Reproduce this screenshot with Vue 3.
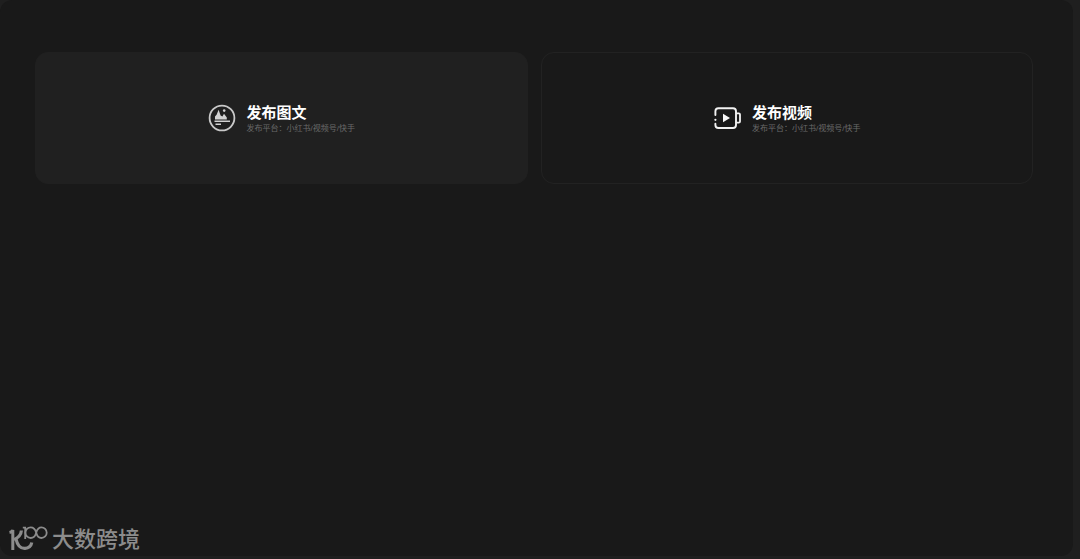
<script setup>
const platforms = '发布平台：小红书/视频号/快手'
</script>

<template>
  <div class="shell">
    <main class="panel">
      <div class="cards">
        <button type="button" class="card active">
          <svg class="icon" viewBox="0 0 28 28" aria-hidden="true">
            <circle cx="14" cy="14" r="12.4" fill="none" stroke="#c9c9c9" stroke-width="1.8" />
            <path d="M7 15.4V12.4L8.6 10.8L10.6 5.8L12.6 11.6L14.4 12.6L16 9.8L18.8 13.6V15.4Z" fill="#d2d2d2" />
            <circle cx="16.2" cy="6.6" r="1.3" fill="#d2d2d2" />
            <path d="M6.5 17.2H22M7.5 20.2H13" fill="none" stroke="#d2d2d2" stroke-width="1.5" />
          </svg>
          <span class="copy">
            <span class="title">发布图文</span>
            <span class="note">{{ platforms }}</span>
          </span>
        </button>
        <button type="button" class="card">
          <svg class="icon" viewBox="0 0 28 28" aria-hidden="true">
            <path d="M2.4 11V7.2Q2.4 4.2 5.4 4.2H20Q23 4.2 23 7.2V21Q23 24 20 24H5.4Q2.4 24 2.4 21V19.8" fill="none" stroke="#f2f2f2" stroke-width="1.9" stroke-linecap="round" />
            <path d="M23.2 9.4H25.8Q27 9.4 27 10.6V17.4Q27 18.6 25.8 18.6H23.2" fill="none" stroke="#f2f2f2" stroke-width="1.8" />
            <path d="M10 9.7V18.3L17 14Z" fill="#f7f7f7" />
            <circle cx="2.4" cy="15.8" r="1.1" fill="#f2f2f2" />
          </svg>
          <span class="copy">
            <span class="title">发布视频</span>
            <span class="note">{{ platforms }}</span>
          </span>
        </button>
      </div>
    </main>
    <div class="mark">
      <svg class="logo" viewBox="0 0 40 28" aria-hidden="true">
        <g fill="none" stroke="#8c8c8c">
          <path d="M0.5 6.5Q3 6 3.8 4V24" stroke-width="3" />
          <path d="M12.4 4.5Q12 10.5 5 13.6M7 13C8.4 19.5 12 22.6 16 22.4C19.5 22.2 22 20.4 22.8 16.5" stroke-width="3.2" />
          <path d="M13.8 1.6H16.2V13" stroke-width="1.8" />
          <path d="M27.2 6.7C26.2 3.2 24.2 1.4 21.7 1.4A5.3 5.3 0 0 0 21.7 12C24.2 12 26.2 10.2 27.2 6.7C28.2 3.2 30.2 1.4 32.4 1.4A5.3 5.3 0 0 1 32.4 12C30.2 12 28.2 10.2 27.2 6.7Z" stroke-width="1.8" />
        </g>
      </svg>
      <span>大数跨境</span>
    </div>
  </div>
</template>

<style>
body {
  background: #1f1f1f;
}
</style>

<style scoped>
.shell {
  position: relative;
  box-sizing: border-box;
  min-height: 100vh;
  padding: 0 7px 3px 0;
  display: flex;
  background: #1f1f1f;
  font-family: "Liberation Sans", "Noto Sans CJK SC", sans-serif;
}

.panel {
  flex: 1;
  box-sizing: border-box;
  padding: 52px 40px 52px 35px;
  border-radius: 12px;
  background: #191919;
}

.cards {
  display: grid;
  grid-template-columns: 1fr 1fr;
  gap: 13px;
}

.card {
  display: flex;
  align-items: center;
  justify-content: center;
  gap: 11px;
  min-height: 132px;
  padding: 16px;
  border: 1px solid #222;
  border-radius: 13px;
  background: transparent;
  font-family: inherit;
  text-align: left;
  cursor: pointer;
}

.card.active {
  background: #202020;
  border-color: #202020;
}

.icon {
  width: 28px;
  height: 28px;
  flex: none;
}

.copy {
  display: flex;
  flex-direction: column;
  padding-top: 2px;
}

.title {
  color: #fff;
  font-size: 15px;
  font-weight: 700;
  line-height: 20px;
}

.note {
  color: #6a6a6a;
  font-size: 8px;
  line-height: 12px;
}

.mark {
  position: absolute;
  left: 9px;
  bottom: 5px;
  display: flex;
  align-items: center;
  gap: 3px;
  color: #8c8c8c;
  font-size: 22px;
  font-weight: 500;
  line-height: 28px;
}

.logo {
  width: 40px;
  height: 28px;
}
</style>
